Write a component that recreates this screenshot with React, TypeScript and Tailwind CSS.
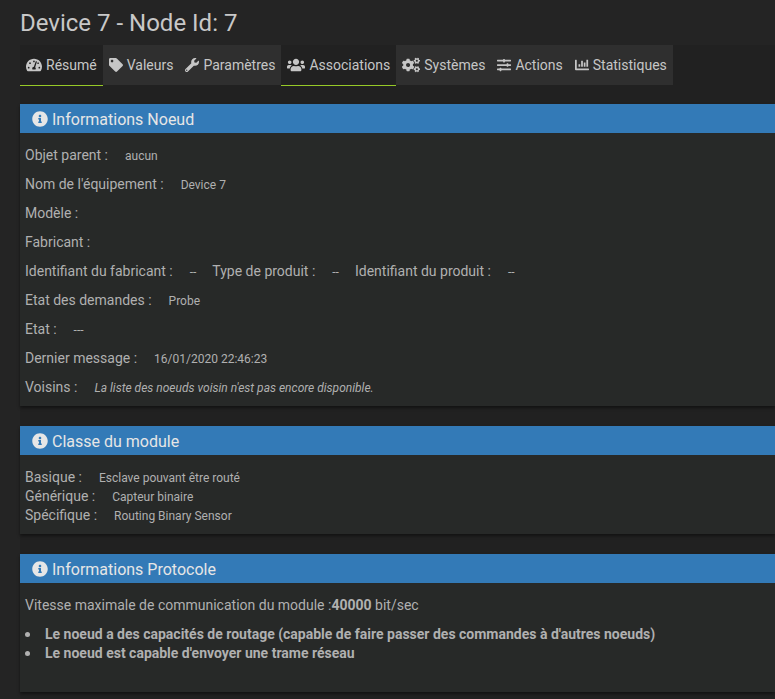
import React, { useState } from 'react';
import {
  FaChartBar,
  FaCogs,
  FaInfoCircle,
  FaSlidersH,
  FaTachometerAlt,
  FaTag,
  FaUsers,
  FaWrench,
} from 'react-icons/fa';
import { IconType } from 'react-icons';

const tabs: { label: string; icon: IconType; iconClass: string }[] = [
  { label: 'Résumé', icon: FaTachometerAlt, iconClass: 'size-4' },
  { label: 'Valeurs', icon: FaTag, iconClass: 'size-3.5' },
  { label: 'Paramètres', icon: FaWrench, iconClass: 'size-3.5' },
  { label: 'Associations', icon: FaUsers, iconClass: 'size-[18px]' },
  { label: 'Systèmes', icon: FaCogs, iconClass: 'size-[18px]' },
  { label: 'Actions', icon: FaSlidersH, iconClass: 'size-3.5' },
  { label: 'Statistiques', icon: FaChartBar, iconClass: 'size-3.5' },
];

// A row can hold several label / value pairs
const nodeRows: { label: string; value?: string; italic?: boolean }[][] = [
  [{ label: 'Objet parent :', value: 'aucun' }],
  [{ label: "Nom de l'équipement :", value: 'Device 7' }],
  [{ label: 'Modèle :' }],
  [{ label: 'Fabricant :' }],
  [
    { label: 'Identifiant du fabricant :', value: '--' },
    { label: 'Type de produit :', value: '--' },
    { label: 'Identifiant du produit :', value: '--' },
  ],
  [{ label: 'Etat des demandes :', value: 'Probe' }],
  [{ label: 'Etat :', value: '---' }],
  [{ label: 'Dernier message :', value: '16/01/2020 22:46:23' }],
  [{ label: 'Voisins :', value: "La liste des noeuds voisin n'est pas encore disponible.", italic: true }],
];

const classRows = [
  { label: 'Basique :', value: 'Esclave pouvant être routé' },
  { label: 'Générique :', value: 'Capteur binaire' },
  { label: 'Spécifique :', value: 'Routing Binary Sensor' },
];

const capabilities = [
  "Le noeud a des capacités de routage (capable de faire passer des commandes à d'autres noeuds)",
  "Le noeud est capable d'envoyer une trame réseau",
];

interface PanelProps {
  title: string;
  children: React.ReactNode;
}

const Panel: React.FC<PanelProps> = ({ title, children }) => (
  <section className="mb-5 bg-[#272928] shadow-[0_2px_3px_rgba(0,0,0,0.45)]">
    <h2 className="flex h-[29px] items-center gap-1 bg-[#337ab7] px-3 text-base text-[#e6e6e6]">
      <FaInfoCircle className="size-4" />
      <span className="pt-0.5">{title}</span>
    </h2>
    {children}
  </section>
);

interface FieldProps {
  label: string;
  value?: string;
  italic?: boolean;
}

const Field: React.FC<FieldProps> = ({ label, value, italic }) => (
  <div className="flex items-baseline gap-[17px]">
    <dt>{label}</dt>
    <dd className={italic ? 'text-xs italic' : 'text-xs'}>{value}</dd>
  </div>
);

const App: React.FC = () => {
  const [activeTabs, setActiveTabs] = useState(['Résumé', 'Associations']);

  return (
    <div className="min-h-screen bg-[#242424] pl-5 font-['Roboto',sans-serif] text-sm leading-[19px] text-[#b0b0b0]">
      <h1 className="flex h-[45px] items-center text-2xl text-[#c8c8c8]">Device 7 - Node Id: 7</h1>

      <main className="min-h-[calc(100vh-45px)] bg-[#212121]">
        <nav className="mb-[18px] flex" role="tablist">
          {tabs.map(({ label, icon: Icon, iconClass }) => (
            <button
              key={label}
              type="button"
              role="tab"
              aria-selected={activeTabs.includes(label)}
              onClick={() => setActiveTabs([label])}
              className={`flex h-[41px] items-center gap-1 whitespace-nowrap border-b px-1.5 text-[#c6c6c6] ${
                activeTabs.includes(label)
                  ? 'border-[#96c927] bg-[#212121]'
                  : 'border-[#212121] bg-[#2f2f2f]'
              }`}
            >
              <Icon className={iconClass} />
              {label}
            </button>
          ))}
        </nav>

        <Panel title="Informations Noeud">
          <dl className="px-[5px] pt-2 pb-1">
            {nodeRows.map((row) => (
              <div key={row[0].label} className="flex h-[29px] items-center gap-4">
                {row.map((field) => (
                  <Field key={field.label} {...field} />
                ))}
              </div>
            ))}
          </dl>
        </Panel>

        <Panel title="Classe du module">
          <dl className="px-[5px] pt-[13px] pb-[9px]">
            {classRows.map((row) => (
              <Field key={row.label} {...row} />
            ))}
          </dl>
        </Panel>

        <Panel title="Informations Protocole">
          <div className="px-[5px] pt-[13px] pb-[29px]">
            <p className="mb-2.5">
              Vitesse maximale de communication du module :<b>40000</b> bit/sec
            </p>
            <ul className="font-bold">
              {capabilities.map((text) => (
                <li
                  key={text}
                  className="flex items-center gap-[15px] before:size-[5px] before:shrink-0 before:rounded-full before:bg-current"
                >
                  {text}
                </li>
              ))}
            </ul>
          </div>
        </Panel>
      </main>
    </div>
  );
};

export default App;
